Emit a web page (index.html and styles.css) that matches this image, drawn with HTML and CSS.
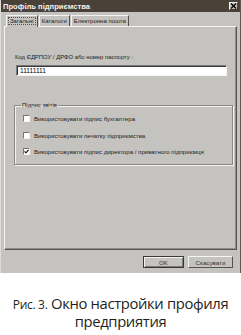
FILE: index.html
```html
<!DOCTYPE html>
<html lang="uk">
<head>
<meta charset="utf-8">
<link rel="stylesheet" href="styles.css">
</head>
<body>
<div class="dialog">
  <div class="titlebar">
    <span class="title">Профіль підприємства</span>
    <span class="close"><svg width="7" height="6" viewBox="0 0 7 6"><path d="M1 0.5 L6 5.5 M6 0.5 L1 5.5" stroke="#000" stroke-width="1.3"/></svg></span>
  </div>
  <div class="tabs">
    <span class="tab active">Загальні</span>
    <span class="tab">Каталоги</span>
    <span class="tab">Електронна пошта</span>
  </div>
  <div class="panel">
    <div class="field-label">Код ЄДРПОУ / ДРФО або номер паспорту :</div>
    <div class="input">11111111</div>
    <fieldset class="group">
      <legend>Підпис звітів</legend>
      <div class="check"><span class="box"></span>Використовувати підпис бухгалтера</div>
      <div class="check"><span class="box"></span>Використовувати печатку підприємства</div>
      <div class="check"><span class="box"><svg width="5" height="5" viewBox="0 0 5 5"><path d="M0.5 2.3 L2 3.8 L4.5 0.8" fill="none" stroke="#000" stroke-width="1.1"/></svg></span>Використовувати підпис директора / приватного підприємця</div>
    </fieldset>
  </div>
  <div class="buttons">
    <span class="btn default">OK</span>
    <span class="btn">Скасувати</span>
  </div>
</div>
<div class="caption">
  <div class="line"><span class="fig">Рис. 3.</span> Окно настройки профиля</div>
  <div class="line">предприятия</div>
</div>
</body>
</html>
```
FILE: styles.css
```css
* { box-sizing: border-box; }
body {
  margin: 0;
  background: #fff;
  font-family: "Liberation Sans", Arial, sans-serif;
}
.dialog {
  width: 241px;
  height: 273px;
  background: #c4c3bf;
  border-left: 1px solid #dedcd8;
  border-right: 1px solid #5c5a56;
  display: flex;
  flex-direction: column;
}
.titlebar {
  height: 12px;
  background: #4a4139;
  display: flex;
  align-items: center;
  justify-content: space-between;
  padding: 0 2px 0 2px;
}
.title {
  color: #f2f0ec;
  font-weight: bold;
  font-size: 7.6px;
  line-height: 9px;
}
.close {
  width: 9px;
  height: 8px;
  background: #c4c3bf;
  border: 1px solid;
  border-color: #f0f0f0 #404040 #404040 #f0f0f0;
  display: flex;
  align-items: center;
  justify-content: center;
}
.close svg { display: block; }
.tabs {
  display: flex;
  margin: 2px 0 0 5px;
  height: 12px;
  align-items: flex-end;
}
.tab {
  font-size: 6px;
  color: #222;
  height: 11px;
  line-height: 10px;
  padding: 0 2px;
  border: 1px solid;
  border-color: #f4f4f2 #55534f transparent #f4f4f2;
  border-bottom: none;
  margin-right: 1px;
}
.tab.active {
  height: 12px;
  position: relative;
  top: 1px;
  background: #c4c3bf;
  z-index: 1;
  padding: 0 3px;
}
.tab.active::after {
  content: "";
  position: absolute;
  inset: 1px 1px 2px 1px;
  border: 1px dotted #555;
}
.panel {
  margin: 0 3px 0 3px;
  height: 224px;
  border: 1px solid;
  border-color: #f4f4f2 #55534f #55534f #f4f4f2;
  box-shadow: inset -1px -1px 0 #908e8a;
  padding: 26px 10px 0 10px;
}
.field-label {
  font-size: 5.9px;
  color: #222;
  height: 9px;
  line-height: 9px;
}
.input {
  margin: 3px 0 0 1px;
  width: 211px;
  height: 11px;
  background: #fff;
  border: 1px solid;
  border-color: #7a7874 #f4f4f2 #f4f4f2 #7a7874;
  box-shadow: inset 1px 1px 0 #3c3a36;
  font-size: 6.6px;
  line-height: 9px;
  padding-left: 3px;
  color: #000;
}
.group {
  margin: 26px 0 0 -1px;
  width: 219px;
  height: 63px;
  border: 1px solid #8a8884;
  box-shadow: 1px 1px 0 #f2f2f0, inset 1px 1px 0 #f2f2f0;
  padding: 6px 0 0 8px;
}
.group legend {
  font-size: 6px;
  color: #222;
  padding: 0 1px;
  margin-left: -2px;
  line-height: 7px;
}
.check {
  display: flex;
  align-items: center;
  font-size: 6.1px;
  color: #222;
  height: 7px;
  margin-bottom: 9.7px;
}
.box {
  flex: none;
  width: 7px;
  height: 7px;
  background: #fff;
  border: 1px solid;
  border-color: #7a7874 #f4f4f2 #f4f4f2 #7a7874;
  margin-right: 4px;
  display: flex;
  align-items: center;
  justify-content: center;
}
.box svg { display: block; }
.buttons {
  display: flex;
  justify-content: flex-end;
  gap: 4px;
  margin: 6px 7px 0 0;
}
.btn {
  height: 12px;
  width: 45px;
  font-size: 6.2px;
  color: #333;
  display: flex;
  align-items: center;
  justify-content: center;
  border: 1px solid;
  border-color: #f4f4f2 #55534f #55534f #f4f4f2;
}
.btn.default {
  width: 41px;
  border: 1px solid #3a3834;
  box-shadow: inset 1px 1px 0 #f4f4f2, inset -1px -1px 0 #7a7874;
}
.caption {
  margin-top: 21px;
  text-align: center;
  font-family: "Open Sans", "Noto Sans", sans-serif;
  font-size: 14.8px;
  color: #231f20;
  letter-spacing: -0.35px;
}
.line {
  height: 18px;
  line-height: 18px;
}
.fig {
  font-size: 12px;
  line-height: 12px;
  letter-spacing: -0.3px;
}
```
